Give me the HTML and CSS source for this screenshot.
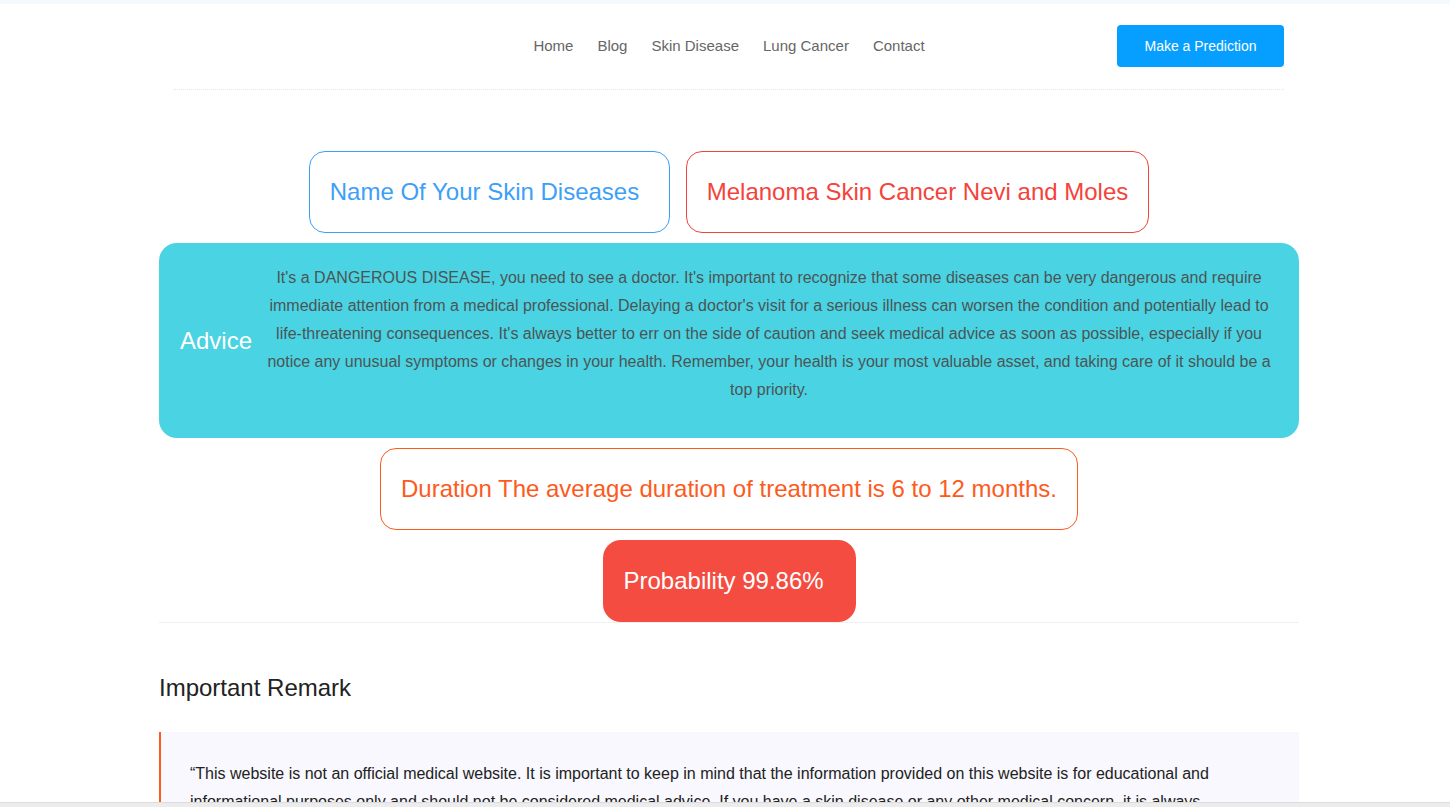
FILE: index.html
```html
<!DOCTYPE html>
<html lang="en">
<head>
<meta charset="utf-8">
<title>Skin Disease Result</title>
<link rel="stylesheet" href="styles.css">
</head>
<body>
<div class="topstrip"></div>
<header class="header">
  <div class="header-inner">
    <div class="logo"></div>
    <nav class="nav">
      <a href="#">Home</a>
      <a href="#">Blog</a>
      <a href="#">Skin Disease</a>
      <a href="#">Lung Cancer</a>
      <a href="#">Contact</a>
    </nav>
    <a class="btn-predict" href="#">Make a Prediction</a>
  </div>
</header>
<main class="container">
  <section class="result">
    <div class="row-names">
      <div class="pill pill-blue">Name Of Your Skin Diseases</div>
      <div class="pill pill-red">Melanoma Skin Cancer Nevi and Moles</div>
    </div>
    <div class="advice">
      <div class="advice-label">Advice</div>
      <p class="advice-text">It's a DANGEROUS DISEASE, you need to see a doctor. It's important to recognize that some diseases can be very dangerous and require immediate attention from a medical professional. Delaying a doctor's visit for a serious illness can worsen the condition and potentially lead to life-threatening consequences. It's always better to err on the side of caution and seek medical advice as soon as possible, especially if you notice any unusual symptoms or changes in your health. Remember, your health is your most valuable asset, and taking care of it should be a top priority.</p>
    </div>
    <div class="row-center">
      <div class="pill pill-orange">Duration The average duration of treatment is 6 to 12 months.</div>
    </div>
    <div class="row-center">
      <div class="prob">Probability 99.86%</div>
    </div>
  </section>
  <section class="remark">
    <h2 class="remark-title">Important Remark</h2>
    <blockquote class="quote">“This website is not an official medical website. It is important to keep in mind that the information provided on this website is for educational and informational purposes only and should not be considered medical advice. If you have a skin disease or any other medical concern, it is always recommended to consult with a qualified healthcare professional for proper diagnosis and treatment.”</blockquote>
  </section>
</main>
<div class="bottombar"></div>
</body>
</html>
```
FILE: styles.css
```css
* { box-sizing: border-box; }
html, body { margin: 0; padding: 0; }
body {
  font-family: "Liberation Sans", Arial, sans-serif;
  background: #fff;
  color: #222;
  padding-left: 8px;
}
.topstrip { height: 4px; background: #f4f9fd; margin-left: -8px; }
.header-inner {
  width: 1110px;
  margin: 0 auto;
  height: 86px;
  display: grid;
  grid-template-columns: 1fr auto 1fr;
  align-items: center;
  border-bottom: 1px dotted #e6e6e6;
}
.nav { display: flex; gap: 24px; padding-bottom: 3px; }
.nav a {
  color: #666;
  text-decoration: none;
  font-size: 15px;
}
.btn-predict {
  justify-self: end;
  width: 167px;
  height: 42px;
  display: flex;
  align-items: center;
  justify-content: center;
  background: #069eff;
  color: #fff;
  font-size: 14px;
  text-decoration: none;
  border-radius: 4px;
  margin-bottom: 1px;
}
.container { width: 1140px; margin: 0 auto; }
.result {
  padding-top: 61px;
  display: flex;
  flex-direction: column;
  gap: 10px;
  border-bottom: 1px solid #f0f0f0;
}
.row-names { display: flex; justify-content: center; gap: 16px; }
.row-center { display: flex; justify-content: center; }
.pill {
  height: 82px;
  display: flex;
  align-items: center;
  padding: 0 20px;
  font-size: 24px;
  border: 1px solid;
  border-radius: 16px;
  background: #fff;
  white-space: nowrap;
}
.pill-blue { color: #3d9ff6; border-color: #3d9ff6; width: 361px; }
.pill-red { color: #f4433b; border-color: #f4433b; }
.pill-orange { color: #fd5a1e; border-color: #fd5a1e; }
.advice {
  background: #4ad3e2;
  border-radius: 18px;
  display: flex;
  align-items: center;
  gap: 10px;
  padding: 21px 23px 20px 21px;
}
.advice-label { color: #fff; font-size: 24px; flex: none; }
.advice-text {
  margin: 0 0 14px;
  flex: 1;
  text-align: center;
  font-size: 16px;
  line-height: 28px;
  color: #4a5556;
}
.prob {
  height: 82px;
  width: 253px;
  display: flex;
  align-items: center;
  padding: 0 20px 0 21px;
  background: #f44c41;
  color: #fff;
  font-size: 24px;
  border-radius: 18px;
  white-space: nowrap;
}
.remark { padding-top: 51px; }
.remark-title {
  margin: 0 0 30px;
  font-weight: normal;
  font-size: 24px;
  line-height: 28px;
  color: #222;
}
.quote {
  margin: 0;
  background: #f8f8fe;
  border-left: 2px solid #fd5a1e;
  padding: 28px 28px 30px 29px;
  font-size: 16px;
  line-height: 28px;
  color: #222;
}
.bottombar {
  position: fixed;
  left: 0; right: 0; bottom: 0;
  height: 5px;
  background: #ececec;
  border-top: 1px solid #dcdcdc;
}
```
